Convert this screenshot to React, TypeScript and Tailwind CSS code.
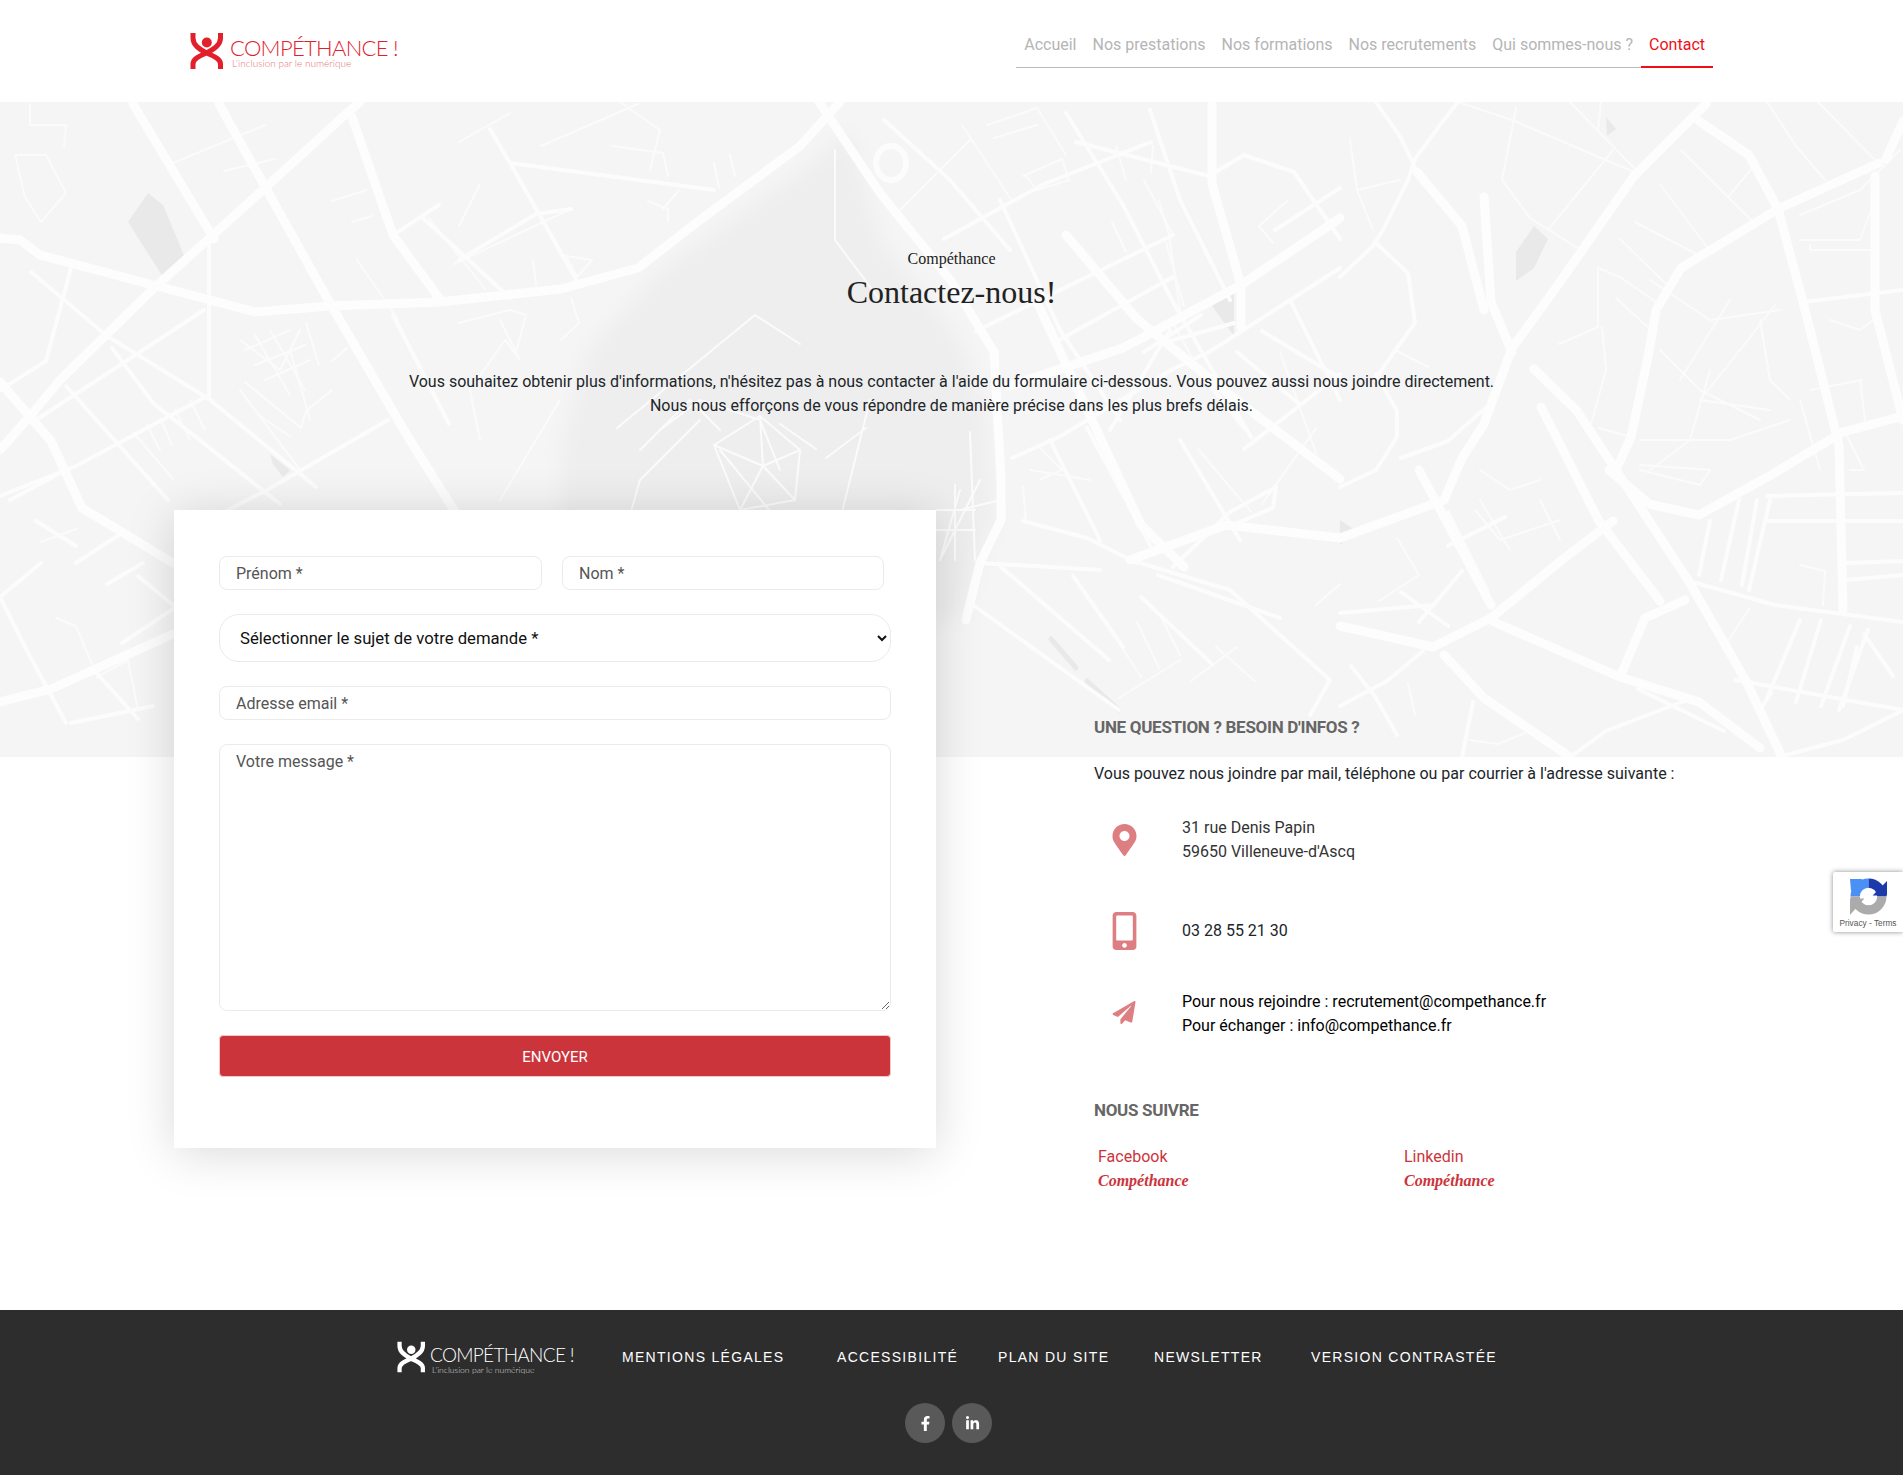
import React from 'react';
import { FaMapMarkerAlt, FaMobileAlt, FaPaperPlane, FaFacebookF, FaLinkedinIn } from 'react-icons/fa';

// map drawing, coordinates are page pixels (viewBox starts at y=102)
const thickRoads: string[] = [
  '360,102 347,113 265,188 204,243 153,289 60,380 31,415 0,450',
  '0,238 20,240 40,255 153,285 255,312 330,306 439,302 561,289 638,268 700,220 800,146 840,102',
  '819,102 880,193 951,281 994,352 1001,479 1001,520 980,563 966,620',
  '1037,302 1141,525 1184,567',
  '1066,235 1137,319 1230,395 1340,479',
  '1212,102 1212,184 1241,285 1241,327',
  '1340,218 1241,285 1123,348 1009,386',
  '1706,104 1634,176 1555,289 1512,348 1484,424 1462,458 1444,500 1340,538 1226,525 1130,560',
  '1879,163 1778,209 1681,268 1656,310 1649,352 1631,437 1616,470',
  '1699,121 1749,155 1778,209 1803,302 1839,445 1843,609',
  '1903,416 1843,432 1771,475 1699,515 1649,504 1609,470',
  '1534,369 1577,411 1688,580 1746,681 1782,757',
  '1541,407 1599,521 1660,601',
  '1484,197 1491,302 1512,352',
  '1417,172 1462,226 1484,310',
  '1340,626 1433,647 1491,618 1563,559 1613,521',
  '1494,622 1620,677 1699,702 1760,748',
  '1444,655 1484,698 1570,757',
  '1620,677 1645,618 1685,600',
  '1875,176 1875,310 1903,420',
  '1903,121 1886,159',
  '1419,470 1491,605',
  '0,382 51,441 82,508 173,563',
  '0,702 51,689 173,634',
  '133,104 214,239',
  '219,104 327,298 408,437 474,542',
  '352,117 393,235 439,298',
];

const mediumRoads: string[] = [
  '1340,277 1372,247 1383,230 1408,180 1415,159 1440,125 1458,102',
  '1376,102 1401,138 1417,172',
  '1376,243 1408,273 1415,323 1394,352 1376,378',
  '1340,487 1376,470 1397,437 1397,411 1376,374',
  '1401,458 1448,441 1491,403',
  '1448,512 1487,590',
  '1685,580 1775,605 1903,622',
  '1803,302 1903,290',
  '1767,496 1903,493',
  '1767,521 1903,521',
  '1739,500 1721,580',
  '1757,500 1742,585',
  '1770,500 1749,590',
  '1800,620 1767,698',
  '1821,620 1796,702',
  '1850,626 1821,706',
  '1868,630 1839,710',
  '1735,680 1903,710',
  '1903,710 1843,740 1778,757',
  '1066,113 1123,205 1173,302 1251,437',
  '1340,268 1209,352 1173,369 1059,437 1012,458',
  '1244,449 1340,374',
  '976,331 1173,235',
  '944,239 1044,184 1151,142',
  '1076,142 1209,176 1244,155 1294,172 1340,239',
  '973,605 1119,710',
  '1130,560 1230,590 1330,680 1310,715',
  '980,563 1100,570',
  '71,268 46,361 0,390',
  '31,272 107,336 209,399',
  '204,310 36,420',
  '112,348 153,403 280,504',
  '66,386 168,500',
  '209,399 316,487',
  '388,420 265,491 224,512',
  '0,496 76,466 209,395',
  '209,243 209,395',
  '510,163 577,281',
  '490,129 510,163 714,190',
  '423,218 510,298',
  '393,235 439,205',
  '0,597 25,647 66,723',
  '92,668 138,719',
  '884,120 950,180 1010,250',
  '1000,200 1060,330 1120,420',
  '1050,440 1100,540',
  '1150,110 1180,200 1230,300',
  '1110,430 1170,330',
  '1180,440 1240,540',
  '1290,300 1340,400',
  '1059,340 1173,277',
  '1159,344 1234,323',
  '1144,352 1201,315',
  '1023,521 1087,538 1137,563',
  '1087,428 1155,554',
  '1173,567 1230,512 1276,487 1273,508 1223,529',
  '1158,575 1280,618',
  '1141,597 1212,664',
  '1001,567 1109,660',
  '1073,576 1123,647',
  '1262,331 1340,378',
  '1237,352 1298,403',
  '1191,361 1244,428',
  '1275,230 1340,188',
  '1340,613 1433,605',
  '1462,571 1419,622',
  '1448,546 1505,517',
  '1401,592 1448,626',
  '1340,706 1387,681 1423,651',
  '1351,666 1376,698 1397,735',
  '1473,702 1462,757',
  '1570,757 1606,731 1692,698',
  '1638,689 1724,731',
  '1771,693 1760,710 1778,748',
  '1846,563 1903,561',
  '1846,580 1903,575',
  '1710,521 1699,575',
  '1864,634 1893,676',
  '1857,647 1843,706',
  '36,521 76,546',
  '76,563 122,533',
  '107,584 143,563',
  '138,576 173,605',
  '122,643 173,609',
  '0,597 41,563',
  '71,723 153,706',
  '393,315 449,424',
  '459,260 536,214 571,209',
  '10,500 66,470',
];

const thinRoads: string[] = [
  '1458,102 1512,120 1634,172',
  '1516,108 1502,180 1530,218 1584,252',
  '1613,150 1548,230',
  '1570,102 1638,172',
  '1601,102 1598,130',
  '1681,150 1753,222',
  '1660,184 1710,251',
  '1635,222 1700,256',
  '1620,239 1667,285',
  '1616,298 1652,331',
  '1598,268 1620,277 1656,302',
  '1598,268 1598,327 1559,344',
  '1602,327 1606,370 1591,424',
  '1599,428 1631,437',
  '1818,102 1878,163',
  '1767,102 1796,146 1825,180',
  '1753,167 1728,197',
  '1800,400 1820,470',
  '1860,380 1865,420',
  '1810,390 1862,380',
  '1650,280 1710,320 1780,310',
  '1775,305 1740,350 1700,400',
  '1660,350 1700,390 1760,420',
  '1640,440 1730,440 1790,420',
  '1650,470 1690,440 1710,370',
  '1700,400 1770,410',
  '1640,470 1700,485 1710,470 1640,465',
  '1680,380 1730,300',
  '1760,320 1770,380 1790,400',
  '1480,470 1510,490 1540,480',
  '1475,510 1500,540 1530,530 1560,520',
  '1480,500 1510,550',
  '1540,500 1560,540',
  '1350,140 1357,190 1400,180',
  '1357,190 1373,230',
  '1395,350 1428,367',
  '1800,240 1860,240 1875,200',
  '1810,245 1810,250 1870,250',
  '1900,150 1860,190 1800,215',
  '1830,320 1860,330 1880,315',
  '15,155 46,155 66,193 41,222 25,197 15,155',
  '30,104 30,125 66,125 64,146',
  '173,163 265,125',
  '357,260 398,319',
  '480,184 459,226',
  '571,209 454,264',
  '240,340 280,370 300,330',
  '290,350 310,420',
  '240,390 300,470',
  '500,320 520,360 505,340 470,390 480,440',
  '560,400 500,500',
  '620,102 660,130 650,170',
  '835,150 835,240 880,300',
  '960,490 940,560 980,480',
  '960,510 1000,500',
  '870,400 840,520',
  '700,420 640,480 620,550',
  '720,450 810,560',
  '660,430 700,400 760,420 780,470',
  '1030,470 1090,480',
  '900,210 970,140',
  // second pass, side streets
  '224,171 275,159',
  '332,201 367,190',
  '352,222 372,216',
  '459,142 510,113',
  '541,146 638,104',
  '612,146 663,153 668,176',
  '714,163 719,188',
  '730,155 735,176',
  '648,201 668,209 668,222',
  '679,190 663,209',
  '429,218 485,289',
  '533,260 536,285',
  '566,256 592,260 577,277 566,256',
  '459,323 510,310 526,315 516,352',
  '571,298 579,323 561,340',
  '306,323 319,365',
  '332,361 347,348',
  '245,350 290,330',
  '255,365 305,345',
  '265,380 310,360',
  '255,335 290,395',
  '270,330 305,390',
  '245,382 301,428 306,411 332,390',
  '260,416 291,437',
  '133,432 173,479',
  '147,425 160,450',
  '160,418 172,445',
  '175,410 190,440',
  '190,400 205,430',
  '41,542 76,529',
  '56,618 76,626 92,664',
  '97,677 128,660 138,710',
  '617,428 755,315 800,344',
  '816,449 780,424',
  '866,428 826,458',
  '714,445 760,416 800,450 795,500 740,510 714,445',
  '763,466 714,445',
  '763,466 760,416',
  '763,466 800,450',
  '763,466 795,500',
  '763,466 740,510',
  '640,450 690,400 720,430',
  '937,510 975,510',
  '937,530 975,530',
  '955,485 955,560',
  '970,432 975,560',
  '1116,146 1126,180',
  '1153,146 1151,172',
  '1144,180 1173,235',
  '1169,235 1180,310',
  '1112,222 1126,252',
  '1159,201 1169,235',
  '1026,176 1037,190 1069,180 1062,159 1023,176',
  '962,125 1012,201',
  '987,125 1037,108',
  '994,138 1037,125',
  '1037,108 1066,155',
  '1173,323 1194,361',
  '1166,243 1184,306',
  '1273,243 1259,226 1287,201',
  '1037,445 1062,470 1041,479',
  '1023,487 1026,521',
  '1198,449 1251,512',
  '1280,352 1316,453',
  '1316,428 1262,504',
  '1316,605 1340,584',
  '1216,647 1255,681',
  '1159,613 1180,655',
  '1137,622 1159,668',
  '1119,643 1141,677',
  '1180,660 1119,698',
  '1237,647 1191,681',
  '1749,609 1724,647 1746,677',
  '1843,428 1864,470 1850,470',
  '1800,565 1825,571 1823,605',
  '1397,538 1419,575 1379,601',
  '1408,683 1415,715',
  '1469,740 1498,744 1530,731',
];

const Map = () => (
  <svg viewBox="0 102 1903 655" className="h-full w-full" fill="none" strokeLinejoin="round" strokeLinecap="round">
    <defs>
      <filter id="soft">
        <feGaussianBlur stdDeviation="10" />
      </filter>
    </defs>
    <rect x="0" y="102" width="1903" height="655" fill="#f5f5f5" />
    <path d="M800 172 L663 268 L587 352 L561 449 L561 620 L960 620 L995 520 L985 410 L960 340 L880 240 L850 130 Z" fill="#eeeeee" filter="url(#soft)" />
    <path d="M148 193 L163 205 L186 260 L163 277 L128 222 Z M1534 226 L1548 239 L1534 268 L1516 281 L1516 252 Z M1606 117 L1616 129 L1607 136 Z M1212 306 L1234 289 L1234 336 Z M270 454 L290 470 L283 477 L273 464 Z M1340 520 L1355 530 L1340 545 Z" fill="#e9e9e9" />
    <polyline points="1051,639 1076,668" stroke="#e9e9e9" strokeWidth="5" />
    <polyline points="1087,681 1119,710" stroke="#e9e9e9" strokeWidth="5" />
    <ellipse cx="891" cy="163" rx="15" ry="17" stroke="#fcfcfc" strokeWidth="6" />
    {thinRoads.map((p) => (
      <polyline key={p} points={p} stroke="#fbfbfb" strokeWidth="2" />
    ))}
    {mediumRoads.map((p) => (
      <polyline key={p} points={p} stroke="#fcfcfc" strokeWidth="4" />
    ))}
    {thickRoads.map((p) => (
      <polyline key={p} points={p} stroke="#fdfdfd" strokeWidth="9" />
    ))}
  </svg>
);

const LogoMark = ({ color, className }: { color: string; className: string }) => (
  <svg viewBox="0 0 33 36" className={className} fill="none">
    <circle cx="16.800" cy="9.500" r="5" fill={color} />
    <path d="M3 0v5c0 7 6 11 13.500 15C24 16 30.500 12 30.500 5V0M3 36v-5c0-5 6-8 13.500-11C24 23 30.500 26 30.500 31v5" stroke={color} strokeWidth="5" />
  </svg>
);

const navItems = ['Accueil', 'Nos prestations', 'Nos formations', 'Nos recrutements', 'Qui sommes-nous ?'];
const footerLinks = [
  { label: 'Mentions légales', width: 'w-[215px]' },
  { label: 'Accessibilité', width: 'w-[161px]' },
  { label: 'Plan du site', width: 'w-[156px]' },
  { label: 'Newsletter', width: 'w-[157px]' },
  { label: 'Version contrastée', width: 'w-[200px]' },
];

const fieldClass =
  'w-full h-[34px] rounded-[8px] border border-[#ebebeb] bg-white px-4 text-base text-[#333] outline-none placeholder:text-[#555]';

export default function App() {
  return (
    <div className="min-h-[1475px] bg-white font-['Roboto',sans-serif] text-base leading-6 text-[#212529]">
      {/* Header */}
      <header className="flex h-[102px] items-start justify-between pl-[190px] pr-[190px] pt-[33px]">
        <a className="flex items-start gap-[7px]">
          <LogoMark color="#e2202b" className="h-[36px] w-[33px]" />
          <div className="flex flex-col pt-[2px]">
            <span className="font-['Lato',sans-serif] text-[22px] font-light leading-[25px] tracking-[-0.7px] text-[#e2202b]">COMPÉTHANCE !</span>
            <span className="-mt-[2px] pl-[2px] font-['Lato',sans-serif] text-[10px] font-light leading-[10px] text-[#e8747a]">L'inclusion par le numérique</span>
          </div>
        </a>
        <nav className="flex border-b border-[#bbbbbb]">
          {navItems.map((item) => (
            <a key={item} className="block px-2 pb-[10px] text-[#b5b5b5]">
              {item}
            </a>
          ))}
          <a className="relative block px-2 pb-[10px] text-[#f00f16]">
            Contact
            <span className="absolute -bottom-[1px] left-0 right-0 h-[2px] bg-[#f00f16]" />
          </a>
        </nav>
      </header>

      {/* Contact section with the map behind it */}
      <main className="relative pb-[117px]">
        <div className="absolute left-0 right-0 top-0 h-[655px]">
          <Map />
        </div>

        <div className="relative">
          <div className="flex flex-col items-center pt-[145px] text-center">
            <p className="font-['Liberation_Serif',serif] text-[#222]">Compéthance</p>
            <h1 className="mt-[3px] font-['Liberation_Serif',serif] text-[32px] font-normal leading-9 text-[#222]">Contactez-nous!</h1>
            <p className="mb-[92px] mt-[60px]">
              Vous souhaitez obtenir plus d'informations, n'hésitez pas à nous contacter à l'aide du formulaire ci-dessous. Vous pouvez aussi nous joindre directement.
              <br />
              Nous nous efforçons de vous répondre de manière précise dans les plus brefs délais.
            </p>
          </div>

          <div className="flex gap-[158px] pl-[174px]">
            {/* Form */}
            <form className="flex h-[638px] w-[762px] shrink-0 flex-col gap-6 bg-white px-[45px] pt-[46px] shadow-[0_5px_45px_rgba(0,0,0,0.15)]">
              <div className="flex gap-5">
                <div className="w-[323px]">
                  <input className={fieldClass} placeholder="Prénom *" />
                </div>
                <div className="w-[322px]">
                  <input className={fieldClass} placeholder="Nom *" />
                </div>
              </div>
              <select className="h-[48px] w-full rounded-[20px] border border-[#ebebeb] bg-white pl-4 pr-1 text-[16.7px] font-normal text-[#111] outline-none">
                <option>Sélectionner le sujet de votre demande *</option>
              </select>
              <input className={fieldClass} placeholder="Adresse email *" />
              <textarea className="h-[267px] w-full rounded-[8px] border border-[#ebebeb] bg-white px-4 py-[5px] text-base outline-none placeholder:text-[#555]" placeholder="Votre message *" />
              <button type="button" className="h-[42px] w-full rounded-[4px] border border-[#f0c8ca] bg-[#cc343c] pt-[1px] text-[15px] uppercase text-white">
                Envoyer
              </button>
            </form>

            {/* Contact details */}
            <div className="w-[600px] pt-[205px]">
              <h2 className="text-[17px] font-bold uppercase tracking-[-0.3px] text-[#666]">Une question ? Besoin d'infos ?</h2>
              <p className="mt-[23px]">Vous pouvez nous joindre par mail, téléphone ou par courrier à l'adresse suivante :</p>

              <div className="mt-[30px] flex items-center">
                <div className="flex w-[88px] justify-start pl-[18px]">
                  <FaMapMarkerAlt className="h-[32px] w-[25px] text-[#dd7f82]" />
                </div>
                <p className="text-[#333]">
                  31 rue Denis Papin
                  <br />
                  59650 Villeneuve-d'Ascq
                </p>
              </div>

              <div className="mt-[48px] flex items-center">
                <div className="flex w-[88px] justify-start pl-[18px]">
                  <FaMobileAlt className="h-[38px] w-[25px] text-[#dd7f82]" />
                </div>
                <p>03 28 55 21 30</p>
              </div>

              <div className="mt-[40px] flex items-center">
                <div className="-mt-[3px] flex w-[88px] justify-start pl-[18px]">
                  <FaPaperPlane className="h-[23px] w-[24px] text-[#dd7f82]" />
                </div>
                <p className="text-black">
                  Pour nous rejoindre : recrutement@compethance.fr
                  <br />
                  Pour échanger : info@compethance.fr
                </p>
              </div>

              <h2 className="mt-[60px] text-[17px] font-bold uppercase tracking-[-0.3px] text-[#666]">Nous suivre</h2>
              <div className="mt-[23px] flex pl-[4px] text-[#cc343c]">
                <a className="block w-[306px]">
                  Facebook
                  <span className="block font-['Liberation_Serif',serif] font-bold italic">Compéthance</span>
                </a>
                <a className="block">
                  Linkedin
                  <span className="block font-['Liberation_Serif',serif] font-bold italic">Compéthance</span>
                </a>
              </div>
            </div>
          </div>
        </div>
      </main>

      {/* Footer */}
      <footer className="h-[166px] bg-[#2d2d2d] pt-[31px]">
        <div className="flex items-center pl-[397px]">
          <a className="flex w-[225px] items-start gap-[5px]">
            <LogoMark color="#ffffff" className="h-[32px] w-[28px]" />
            <div className="flex flex-col pt-[2px]">
              <span className="font-['Lato',sans-serif] text-[19px] font-light leading-[24px] tracking-[-0.7px] text-white">COMPÉTHANCE !</span>
              <span className="-mt-[2px] pl-[2px] font-['Lato',sans-serif] text-[8.6px] font-light leading-[10px] text-[#ddd]">L'inclusion par le numérique</span>
            </div>
          </a>
          {footerLinks.map((link) => (
            <a key={link.label} className={`${link.width} -mt-[2px] font-['Liberation_Sans',sans-serif] text-sm uppercase tracking-[1.3px] text-white`}>
              {link.label}
            </a>
          ))}
        </div>
        <div className="mt-[28px] flex justify-center gap-[7px] pr-[6px]">
          <a className="flex h-[40px] w-[40px] items-center justify-center rounded-full bg-[#595959] text-white">
            <FaFacebookF className="h-[15px] w-[15px]" />
          </a>
          <a className="flex h-[40px] w-[40px] items-center justify-center rounded-full bg-[#595959] text-white">
            <FaLinkedinIn className="h-[15px] w-[15px]" />
          </a>
        </div>
      </footer>

      {/* reCAPTCHA badge */}
      <div className="absolute right-0 top-[872px] flex h-[60px] w-[70px] flex-col items-center rounded-l-[2px] bg-white shadow-[0_0_5px_rgba(128,128,128,0.9)]">
        <svg viewBox="0 0 36 36" className="mt-[6px] h-[37px] w-[37px]" fill="none" strokeWidth="9">
          <path d="M5 18A13 13 0 0 1 18 5" stroke="#4a90f5" />
          <path d="M18 5A13 13 0 0 1 31 18" stroke="#1c3aa9" />
          <path d="M31 18A13 13 0 0 1 5 18" stroke="#ababab" />
          <path d="M0 1L12 1L1 13Z" fill="#4a90f5" />
          <path d="M36 3L36 17L22 17Z" fill="#1c3aa9" />
          <path d="M0 36L0 20L14 20Z" fill="#ababab" />
        </svg>
        <span className="mt-[2px] whitespace-nowrap font-['Liberation_Sans',sans-serif] text-[8.3px] leading-[12px] text-[#555]">Privacy - Terms</span>
      </div>
    </div>
  );
}
